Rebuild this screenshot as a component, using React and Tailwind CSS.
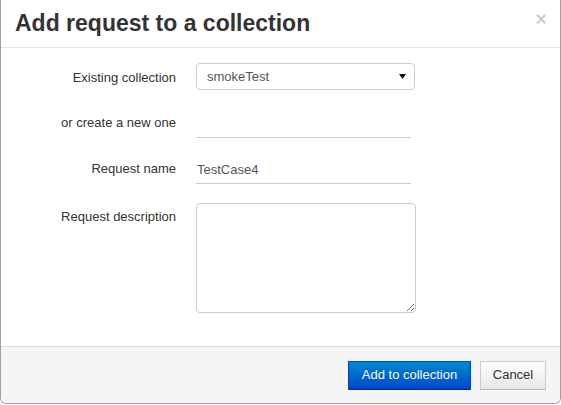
import React from "react";

export default function App() {
  return (
    <div
      className="w-[561px] h-[405px] bg-white"
      style={{ fontFamily: '"Liberation Sans", Arial, sans-serif' }}
    >
      <div className="h-[404px] border-x border-b border-[#a0a0a0] rounded-b-[6px] flex flex-col overflow-hidden bg-white">
        {/* Header */}
        <div className="h-[48px] shrink-0 border-b border-[#e5e5e5] pl-[14px] pr-[13px] flex items-center justify-between">
          <h3 className="text-[23px] font-bold text-[#333] leading-none">
            Add request to a collection
          </h3>
          <span className="self-start mt-[9px] text-[20px] font-bold leading-[20px] text-black/20">×</span>
        </div>

        {/* Body */}
        <div className="flex-1 px-[14px] pt-[15px]">
          <div className="flex items-start">
            <label className="w-[161px] text-right text-[13px] leading-[20px] text-[#333] pt-[5px]">
              Existing collection
            </label>
            <div className="ml-[20px] w-[219px] h-[27px] border border-[#ccc] rounded-[4px] flex items-center justify-between pl-[10px] pr-[8px] text-[13px] text-[#555]">
              <span>smokeTest</span>
              <svg width="7" height="5" viewBox="0 0 7 5">
                <path d="M0 0H7L3.5 5Z" fill="#111" />
              </svg>
            </div>
          </div>

          <div className="flex items-start mt-[19px]">
            <label className="w-[161px] text-right text-[13px] leading-[20px] text-[#333] pt-[4px]">
              or create a new one
            </label>
            <input
              className="ml-[20px] w-[215px] h-[29px] border-b border-[#ccc] px-[1px] text-[13px] text-[#555] outline-none bg-transparent"
              defaultValue=""
            />
          </div>

          <div className="flex items-start mt-[17px]">
            <label className="w-[161px] text-right text-[13px] leading-[20px] text-[#333] pt-[4px]">
              Request name
            </label>
            <input
              className="ml-[20px] w-[215px] h-[29px] border-b border-[#ccc] px-[1px] text-[13px] text-[#555] outline-none bg-transparent"
              defaultValue="TestCase4"
            />
          </div>

          <div className="flex items-start mt-[19px]">
            <label className="w-[161px] text-right text-[13px] leading-[20px] text-[#333] pt-[4px]">
              Request description
            </label>
            <textarea className="ml-[20px] w-[220px] h-[110px] border border-[#ccc] rounded-[4px] outline-none text-[13px] text-[#555] p-[4px]" />
          </div>
        </div>

        {/* Footer */}
        <div className="h-[57px] shrink-0 border-t border-[#ddd] bg-[#f5f5f5] flex items-center justify-end gap-[9px] pr-[14px]">
          <button
            className="h-[29px] w-[123px] flex items-center justify-center text-[13px] text-white bg-gradient-to-b from-[#0088cc] to-[#0044cc] border border-[#0044cc] border-b-[#002a80] rounded-[1px]"
            style={{ textShadow: "0 -1px 0 rgba(0,0,0,0.25)" }}
          >
            Add to collection
          </button>
          <button className="h-[29px] w-[66px] flex items-center justify-center text-[13px] text-[#333] bg-gradient-to-b from-white to-[#e6e6e6] border border-[#ccc] border-b-[#b3b3b3] rounded-[1px]">
            Cancel
          </button>
        </div>
      </div>
    </div>
  );
}
